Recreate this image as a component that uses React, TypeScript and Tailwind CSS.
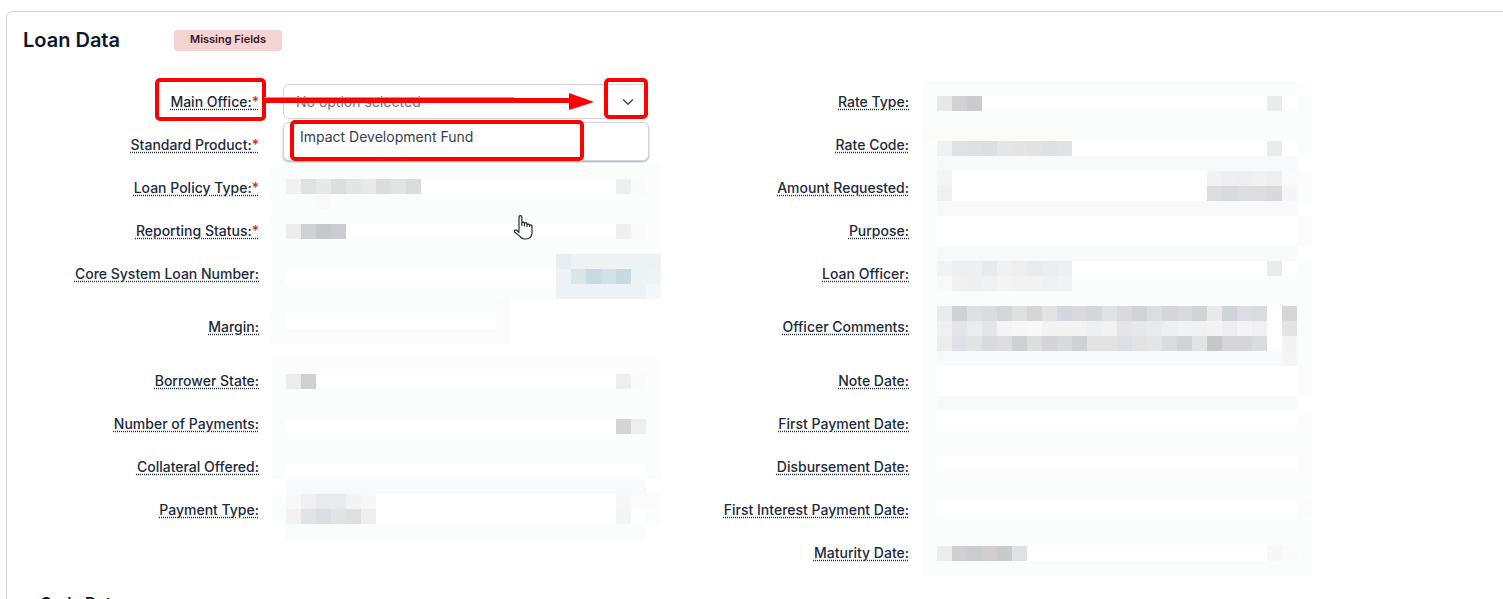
import React from 'react';
import { ChevronDown } from 'lucide-react';

type Cell = string | [number, string];

const B = '#fbfcfc';
const W = '#ffffff';
const L = '#f8f9fb';

const baseRow: Cell[] = [[26, B]];
const whiteRow: Cell[] = [B, [24, W], '#fbfbfb'];
const lightRow: Cell[] = [B, [24, L], W];

// redacted values, one row of 15px squares per line
const leftMosaic: Cell[][] = [
  baseRow,
  [B, '#f1f1f1', '#dfe1e3', '#e7e8e8', '#dcdee0', '#e2e4e8', '#e8e9e8', '#d9dce0', '#e2e3e3', '#d9dce0', [13, W], '#eeeff0', '#fafafa', '#fcfcfc'],
  [[3, B], '#f9f9f9', [22, B]],
  baseRow,
  [B, '#ececec', '#cfd0d3', '#c6c7cd', '#c9ccd2', [18, W], '#eeeff0', '#fafafa', '#fcfcfc'],
  baseRow,
  [[19, B], '#e7eef2', [6, '#edf2f5']],
  [B, [18, W], '#edf2f6', '#d8e5eb', '#c7dbe3', '#d2e1e7', '#c6dae2', '#edf2f5', '#edf3f6'],
  [[19, B], [6, '#edf2f5'], '#f5f8fa'],
  [[15, B], '#fbfbfb', [10, W]],
  [B, [14, W], '#fbfbfb', [10, W]],
  [[15, B], '#fbfbfb', [10, W]],
  [[26, W]],
  baseRow,
  [B, '#ececec', '#cfd0d3', [20, W], '#eeeeef', '#fafafa', '#fcfcfc'],
  baseRow,
  baseRow,
  [B, [22, W], '#d5d5d7', '#eeeeef', B],
  baseRow,
  baseRow,
  [B, [24, W], B],
  [W, [24, L], W],
  [B, '#f8f8f8', '#f0f0f2', '#e9eaec', '#e9eaec', '#f3f3f3', '#f7f7f8', [16, W], '#f6f6f6', '#fbfbfb', '#fbfbfb'],
  [B, '#f3f2f1', '#e1e3e8', '#dcdde0', '#e2e3e5', '#dfdfe0', '#eeeeef', [16, W], '#f4f5f5', W, B],
  [W, [24, '#fafbfb'], W],
];

const rightMosaic: Cell[][] = [
  [[25, B], '#fdfdfd'],
  [B, '#e8e8e8', '#d2d2d4', '#cacbd1', [19, W], '#eaebed', W, B],
  baseRow,
  [[10, '#fbfbfa'], [16, B]],
  [B, '#f1f1f1', '#e0e1e3', '#dfe0e1', '#dddee0', '#e4e5e7', '#e4e4e4', '#e2e2e3', '#dfe0e2', '#e0e3e4', [13, W], '#eaebed', W, B],
  lightRow,
  [B, '#f5f5f7', [17, W], '#f2f2f2', '#efeff1', '#eeeeee', '#f1f1f2', '#efefef', '#fafafa', '#fbfbfb'],
  [B, '#f0f0f2', [17, W], '#dddddf', '#d9dadd', '#dddde0', '#dddde0', '#d9d9db', '#f5f5f8', B],
  lightRow,
  whiteRow,
  whiteRow,
  lightRow,
  [B, '#f3f3f3', '#eeeff1', '#efefef', '#e8e9eb', '#f0f1f3', '#eeeeee', '#e9eaec', '#ebecee', '#eeeff1', [13, W], '#eaebed', W, B],
  [B, '#f9f9f9', '#eff0f2', '#efefef', '#f0f1f3', '#f4f4f5', '#f2f2f2', '#f2f2f3', '#eff0f2', '#f1f2f4', [16, B]],
  baseRow,
  [B, '#ebebeb', '#cfd1d6', '#dfdfe1', '#dbdcde', '#d5d6db', '#dfe0e2', '#d6d6d8', '#e3e3e3', '#d4d8de', '#dadadc', '#d5d7dc', '#e1e2e7', '#dadadb', '#d2d3d8', '#dcdde2', '#d6d6d8', '#d9dadf', '#d2d3d7', '#e9e9e9', '#cfd3da', '#dcdde2', '#dadbe0', W, '#d6d6d6', B],
  [B, '#f0f0f0', '#e3e5e9', '#ebecee', '#e4e5e7', '#f4f4f4', '#f7f7f7', '#f8f8f8', '#f3f3f3', '#f3f3f3', '#f3f3f3', '#eeeff1', '#f2f2f2', '#e5e5e7', '#e7e8ea', '#e9eaec', '#eeeff1', '#f1f2f4', '#f1f1f1', '#f3f3f3', '#efedef', '#f4f4f4', '#f0f0f2', W, '#e4e4e4', B],
  [B, '#ececec', '#dce2e8', '#e3e4e6', '#d9dadc', '#dddddf', '#cfd0d6', '#dddee0', '#d5d5d8', '#d9dadf', '#cfd1d7', '#e3e3e3', '#e3e3e3', '#dbe0e6', '#e3e3e3', '#e4e5e7', '#dadbe0', '#d1d3d9', '#e2e4e3', '#c6c7cc', '#d6d6d9', '#d6d6d8', '#dadbe0', W, '#f3f3f3', B],
  [B, [23, L], '#f5f5f5', B],
  whiteRow,
  whiteRow,
  lightRow,
  whiteRow,
  baseRow,
  baseRow,
  whiteRow,
  baseRow,
  baseRow,
  whiteRow,
  baseRow,
  baseRow,
  [B, '#ecedec', '#cfcfd1', '#c9ccd2', '#d1cecf', '#c9cace', '#dfe1e6', [16, W], '#f7f7f7', '#fbfafa', B],
  baseRow,
];

const Mosaic: React.FC<{ rows: Cell[][] }> = ({ rows }) => (
  <div className="w-[390px]">
    {rows.map((row, rowIndex) => (
      <div key={rowIndex} className="flex h-[15px]">
        {row.map((cell, cellIndex) => {
          const [count, color] = typeof cell === 'string' ? [1, cell] : cell;
          return <div key={cellIndex} style={{ width: count * 15, backgroundColor: color }} />;
        })}
      </div>
    ))}
  </div>
);

interface Field {
  label: string;
  required?: boolean;
  tall?: boolean;
}

const leftFields: Field[] = [
  { label: 'Main Office:', required: true },
  { label: 'Standard Product:', required: true },
  { label: 'Loan Policy Type:', required: true },
  { label: 'Reporting Status:', required: true },
  { label: 'Core System Loan Number:' },
  { label: 'Margin:', tall: true },
  { label: 'Borrower State:' },
  { label: 'Number of Payments:' },
  { label: 'Collateral Offered:' },
  { label: 'Payment Type:' },
];

const rightFields: Field[] = [
  { label: 'Rate Type:' },
  { label: 'Rate Code:' },
  { label: 'Amount Requested:' },
  { label: 'Purpose:' },
  { label: 'Loan Officer:' },
  { label: 'Officer Comments:', tall: true },
  { label: 'Note Date:' },
  { label: 'First Payment Date:' },
  { label: 'Disbursement Date:' },
  { label: 'First Interest Payment Date:' },
  { label: 'Maturity Date:' },
];

const Labels: React.FC<{ fields: Field[]; width: string }> = ({ fields, width }) => (
  <div className={`flex flex-col ${width}`}>
    {fields.map((field) => (
      <div
        key={field.label}
        className={`flex items-center justify-end pb-[2px] ${field.tall ? 'h-[64px]' : 'h-[43px]'}`}
      >
        <span className="text-[14px] font-medium leading-5 text-[#1e293b] underline decoration-dotted underline-offset-2">
          {field.label}
          {field.required && <span className="text-[#dc2626]">*</span>}
        </span>
      </div>
    ))}
  </div>
);

const App: React.FC = () => {
  return (
    <div className="relative h-[599px] overflow-hidden bg-white font-['Inter',sans-serif]">
      <div className="ml-[6px] mt-[11px] w-[1520px] rounded-tl-md border border-[#d1d5db] bg-white">
        <div className="flex h-[69px] items-center pb-[13px] pl-[16px]">
          <h2 className="w-[151px] text-[20px] font-semibold text-[#0f172a]">Loan Data</h2>
          <span className="flex h-[21px] w-[108px] items-center justify-center rounded bg-[#f4d3d3] pb-[1px] text-[11px] font-semibold text-[#3f1526]">
            Missing Fields
          </span>
        </div>

        <div className="flex">
          <Labels fields={leftFields} width="w-[252px]" />
          <div className="ml-[12px] w-[390px]">
            <div className="relative h-[83px] pt-[3px]">
              <div className="ml-[12px] flex h-[35px] w-[365px] items-center justify-between rounded-md border border-[#d1d5db] bg-white pl-[12px] pr-[10px]">
                <span className="text-[14px] text-[#6b7280]">No option selected</span>
                <ChevronDown className="h-[18px] w-[18px] text-[#374151]" strokeWidth={1.75} />
              </div>
              <div className="absolute left-[12px] top-[41px] h-[39px] w-[366px] rounded-md border border-[#d1d5db] bg-white pl-[16px] pt-[3px] text-[14px] text-[#374151] shadow-[0_1px_2px_rgba(0,0,0,0.35)]">
                Impact Development Fund
              </div>
            </div>
            <Mosaic rows={leftMosaic} />
          </div>
          <Labels fields={rightFields} width="w-[248px]" />
          <div className="ml-[13px]">
            <Mosaic rows={rightMosaic} />
          </div>
        </div>

        <h3 className="ml-[33px] mt-[15px] text-[16px] font-semibold text-[#111827]">Code Data</h3>
      </div>

      {/* annotations drawn over the screenshot */}
      <div className="absolute left-[155px] top-[78px] h-[43px] w-[111px] rounded-[5px] border-[4px] border-[#ff0000]" />
      <div className="absolute left-[604px] top-[78px] h-[41px] w-[44px] rounded-[5px] border-[4px] border-[#ff0000]" />
      <div className="absolute left-[290px] top-[120px] h-[41px] w-[294px] rounded-[5px] border-[4px] border-[#ff0000]" />
      <svg className="absolute left-[264px] top-[90px]" width="332" height="22" viewBox="0 0 332 22">
        <rect x="0" y="8" width="310" height="5" fill="#ff0000" />
        <rect x="0" y="7" width="250" height="1" fill="#ff8080" />
        <polygon points="305,3 330,12 305,20" fill="#ff0000" />
      </svg>
      {/* hand cursor */}
      <svg className="absolute left-[513px] top-[214px]" width="21" height="27" viewBox="0 0 21 27">
        <path
          d="M6 17V3a1.4 1.4 0 0 1 2.8 0v8.5V9.5a1.3 1.3 0 0 1 2.6 0v2.5V10a1.3 1.3 0 0 1 2.6 0v2.5V11.5a1.3 1.3 0 0 1 2.6 0V12.5V12a1.2 1.2 0 0 1 2.4 0v7c0 3.6-2.6 6-5.8 6h-1.6c-2 0-3.6-.9-4.7-2.6L1.6 18c-.9-1.3.9-2.8 2.1-1.7L6 18.5"
          fill="#ffffff"
          stroke="#1f2937"
          strokeWidth="1.2"
          strokeLinejoin="round"
          strokeLinecap="round"
        />
      </svg>
    </div>
  );
};

export default App;
